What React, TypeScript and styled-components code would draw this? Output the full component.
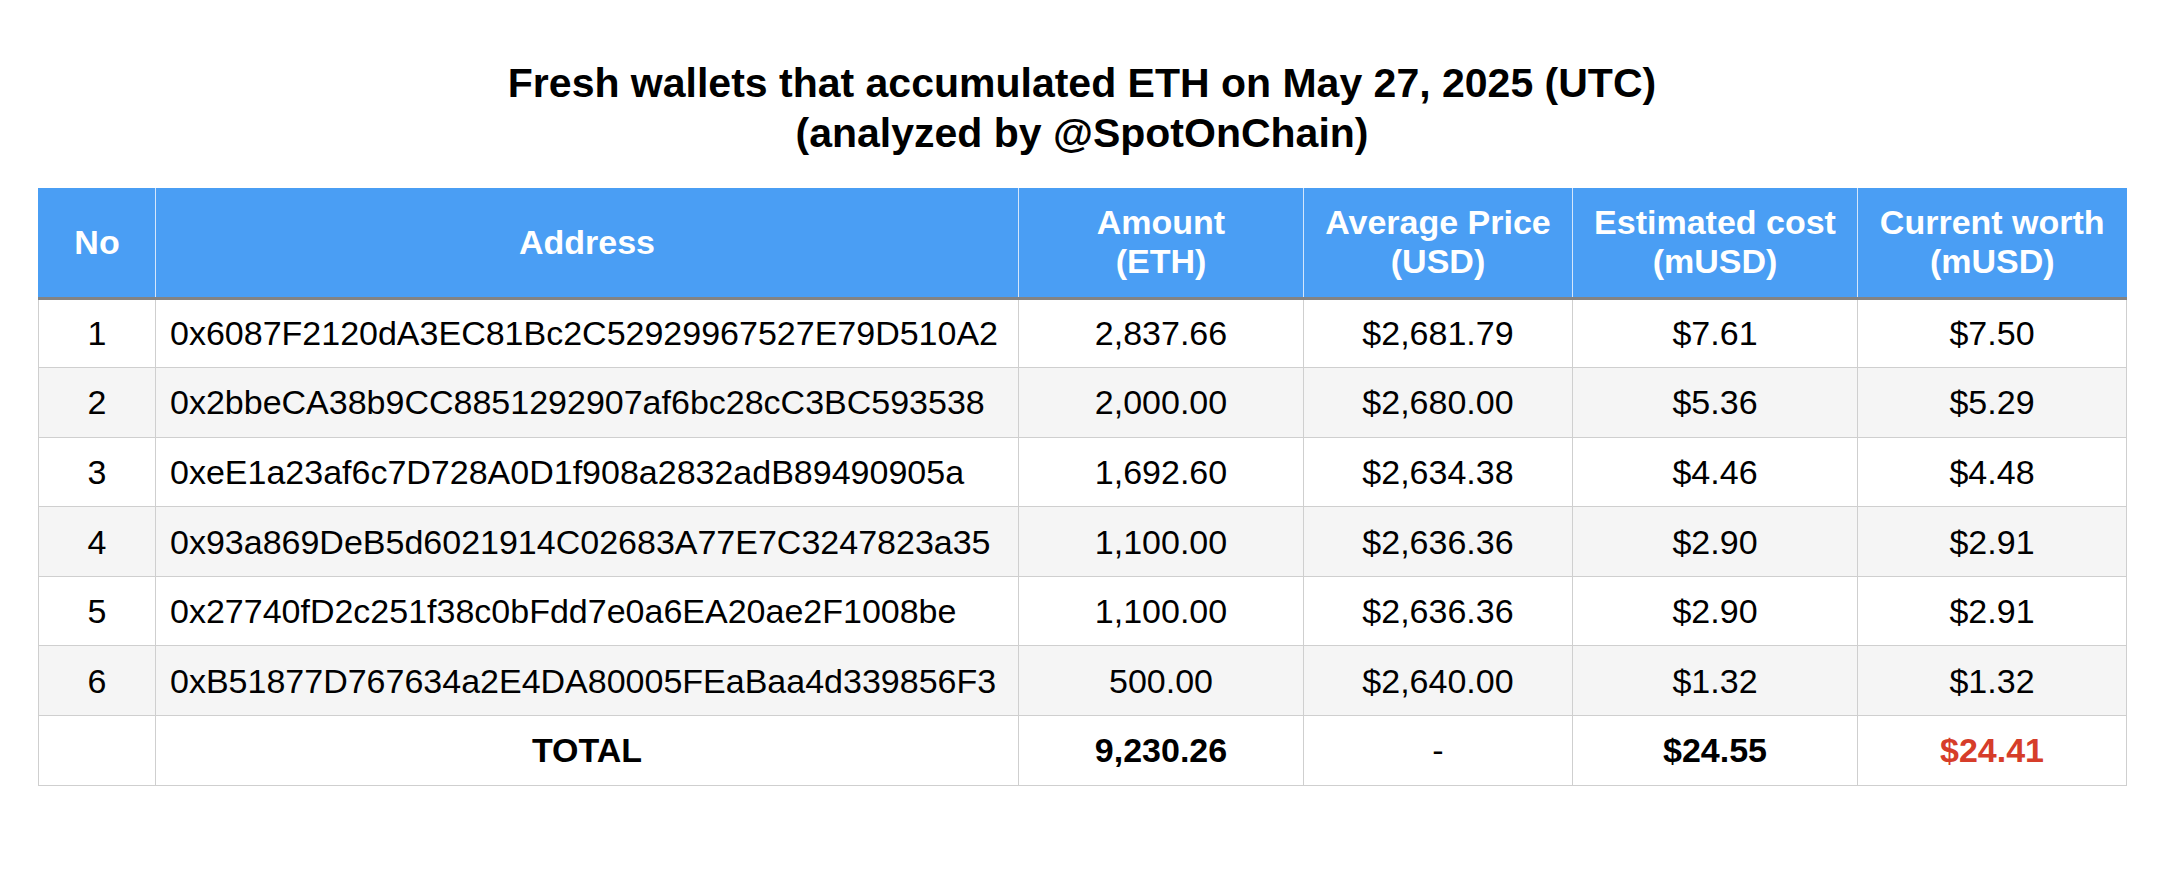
import React from 'react';
import styled, { createGlobalStyle } from 'styled-components';

const GlobalStyle = createGlobalStyle`
  html, body {
    margin: 0;
    padding: 0;
    background: #ffffff;
  }
  body {
    font-family: "Liberation Sans", Arial, Helvetica, sans-serif;
    color: #000;
  }
`;

type Row = {
  no: number;
  address: string;
  amount: string;
  price: string;
  cost: string;
  worth: string;
};

const rows: Row[] = [
  { no: 1, address: '0x6087F2120dA3EC81Bc2C52929967527E79D510A2', amount: '2,837.66', price: '$2,681.79', cost: '$7.61', worth: '$7.50' },
  { no: 2, address: '0x2bbeCA38b9CC8851292907af6bc28cC3BC593538', amount: '2,000.00', price: '$2,680.00', cost: '$5.36', worth: '$5.29' },
  { no: 3, address: '0xeE1a23af6c7D728A0D1f908a2832adB89490905a', amount: '1,692.60', price: '$2,634.38', cost: '$4.46', worth: '$4.48' },
  { no: 4, address: '0x93a869DeB5d6021914C02683A77E7C3247823a35', amount: '1,100.00', price: '$2,636.36', cost: '$2.90', worth: '$2.91' },
  { no: 5, address: '0x27740fD2c251f38c0bFdd7e0a6EA20ae2F1008be', amount: '1,100.00', price: '$2,636.36', cost: '$2.90', worth: '$2.91' },
  { no: 6, address: '0xB51877D767634a2E4DA80005FEaBaa4d339856F3', amount: '500.00', price: '$2,640.00', cost: '$1.32', worth: '$1.32' },
];

const columns = [117, 863, 285, 269, 285, 269];

const Page = styled.div`
  width: 2168px;
  padding: 58px 0 0 38px;
  box-sizing: border-box;
`;

const Title = styled.h1`
  width: 2088px;
  margin: 0 0 30px;
  font-size: 41px;
  line-height: 50px;
  font-weight: 700;
  text-align: center;
`;

const Table = styled.table`
  width: 2088px;
  border-collapse: collapse;
  table-layout: fixed;
  font-size: 34px;
`;

const HeadRow = styled.tr`
  height: 110px;
  background: #4a9ef4;
  border-bottom: 3px solid #838383;
`;

const HeadCell = styled.th`
  color: #ffffff;
  font-weight: 700;
  line-height: 39px;
  text-align: center;
  vertical-align: middle;
  padding: 0;
  border-left: 1px solid #d4e6fb;
  &:first-child {
    border-left: 1px solid #4a9ef4;
  }
`;

const BodyRow = styled.tr<{ $striped?: boolean }>`
  height: 69.6px;
  background: ${(p) => (p.$striped ? '#f5f5f5' : '#ffffff')};
`;

const Cell = styled.td<{ $left?: boolean; $bold?: boolean; $accent?: boolean }>`
  border: 1px solid #cfcfcf;
  padding: 0;
  padding-left: ${(p) => (p.$left ? '14px' : '0')};
  text-align: ${(p) => (p.$left ? 'left' : 'center')};
  vertical-align: middle;
  line-height: 40px;
  white-space: nowrap;
  font-weight: ${(p) => (p.$bold ? 700 : 400)};
  color: ${(p) => (p.$accent ? '#d63d2a' : '#000000')};
`;

export default function App() {
  return (
    <Page>
      <GlobalStyle />
      <Title>
        Fresh wallets that accumulated ETH on May 27, 2025 (UTC)
        <br />
        (analyzed by @SpotOnChain)
      </Title>
      <Table>
        <colgroup>
          {columns.map((w, i) => (
            <col key={i} style={{ width: w }} />
          ))}
        </colgroup>
        <thead>
          <HeadRow>
            <HeadCell>No</HeadCell>
            <HeadCell>Address</HeadCell>
            <HeadCell>
              Amount
              <br />
              (ETH)
            </HeadCell>
            <HeadCell>
              Average Price
              <br />
              (USD)
            </HeadCell>
            <HeadCell>
              Estimated cost
              <br />
              (mUSD)
            </HeadCell>
            <HeadCell>
              Current worth
              <br />
              (mUSD)
            </HeadCell>
          </HeadRow>
        </thead>
        <tbody>
          {rows.map((r, i) => (
            <BodyRow key={r.no} $striped={i % 2 === 1}>
              <Cell>{r.no}</Cell>
              <Cell $left>{r.address}</Cell>
              <Cell>{r.amount}</Cell>
              <Cell>{r.price}</Cell>
              <Cell>{r.cost}</Cell>
              <Cell>{r.worth}</Cell>
            </BodyRow>
          ))}
          <BodyRow>
            <Cell />
            <Cell $bold>TOTAL</Cell>
            <Cell $bold>9,230.26</Cell>
            <Cell>-</Cell>
            <Cell $bold>$24.55</Cell>
            <Cell $bold $accent>
              $24.41
            </Cell>
          </BodyRow>
        </tbody>
      </Table>
    </Page>
  );
}
